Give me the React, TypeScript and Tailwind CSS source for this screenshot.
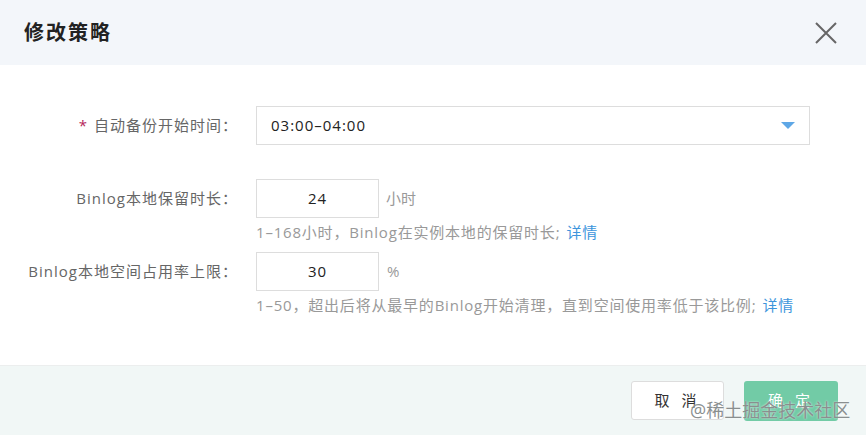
import React from "react";

const FONT = '"Open Sans", "Noto Sans CJK SC", sans-serif';

function Label({ children, required }: { children: React.ReactNode; required?: boolean }) {
	return (
		<div className="w-[238px] shrink-0 text-right text-[15px] text-[#666] leading-[39px] tracking-[1px]">
			{required && <span className="text-[#b5265a] mr-[6px]">*</span>}
			{children}
		</div>
	);
}

function Hint({ children }: { children: React.ReactNode }) {
	return (
		<div className="text-[15px] text-[#999] leading-[20px] mt-[4px] whitespace-nowrap tracking-[0.8px]">
			{children}
			<span className="text-[#3d95dc] ml-[6px]">详情</span>
		</div>
	);
}

export default function App() {
	return (
		<div className="w-[866px] h-[435px] bg-white relative overflow-hidden" style={{ fontFamily: FONT }}>
			<div className="h-[65px] bg-[#f3f6fa] flex items-center justify-between pl-[24px] pr-[28px]">
				<h1 className="text-[20px] font-bold text-[#222] tracking-[2px]">修改策略</h1>
				<svg width="24" height="24" viewBox="0 0 24 24" className="text-[#666]">
					<path d="M2 2 L22 22 M22 2 L2 22" stroke="currentColor" strokeWidth="2" fill="none" />
				</svg>
			</div>

			<div className="h-[300px] pt-[41px] flex flex-col">
				<div className="flex gap-[18px]">
					<Label required>自动备份开始时间：</Label>
					<div className="w-[554px] h-[39px] border border-[#ddd] flex items-center justify-between pl-[14px] pr-[14px]">
						<span className="text-[15px] text-[#222] tracking-[1px]">03:00–04:00</span>
						<svg width="14" height="8" viewBox="0 0 14 8">
							<path d="M0 0 L14 0 L7 7 Z" fill="#5ea7e6" />
						</svg>
					</div>
				</div>

				<div className="flex gap-[18px] mt-[34px]">
					<Label>Binlog本地保留时长：</Label>
					<div>
						<div className="flex items-center gap-[7px]">
							<div className="w-[123px] h-[39px] border border-[#ddd] flex items-center justify-center text-[15px] text-[#222] tracking-[1px]">
								24
							</div>
							<span className="text-[15px] text-[#999]">小时</span>
						</div>
						<Hint>1–168小时，Binlog在实例本地的保留时长;</Hint>
					</div>
				</div>

				<div className="flex gap-[18px] mt-[10px]">
					<Label>Binlog本地空间占用率上限：</Label>
					<div>
						<div className="flex items-center gap-[8px]">
							<div className="w-[123px] h-[39px] border border-[#ddd] flex items-center justify-center text-[15px] text-[#222] tracking-[1px]">
								30
							</div>
							<span className="text-[15px] text-[#999]">%</span>
						</div>
						<Hint>1–50，超出后将从最早的Binlog开始清理，直到空间使用率低于该比例;</Hint>
					</div>
				</div>
			</div>

			<div className="h-[70px] bg-[#f1f7f6] border-t border-[#eceeee] flex items-center justify-end gap-[20px] pr-[28px]">
				<button className="w-[93px] h-[39px] bg-white border border-[#ddd] rounded-[3px] text-[15px] text-[#333] tracking-[4px]">
					取 消
				</button>
				<button className="w-[94px] h-[40px] bg-[#72cba6] rounded-[3px] text-[15px] text-white tracking-[4px]">
					确 定
				</button>
			</div>

			<div
				className="absolute left-[690px] top-[398px] text-[18px] text-[#8a8f8f] leading-[24px]"
				style={{ textShadow: "0 0 2px rgba(255,255,255,0.8)" }}
			>
				@稀土掘金技术社区
			</div>
		</div>
	);
}
